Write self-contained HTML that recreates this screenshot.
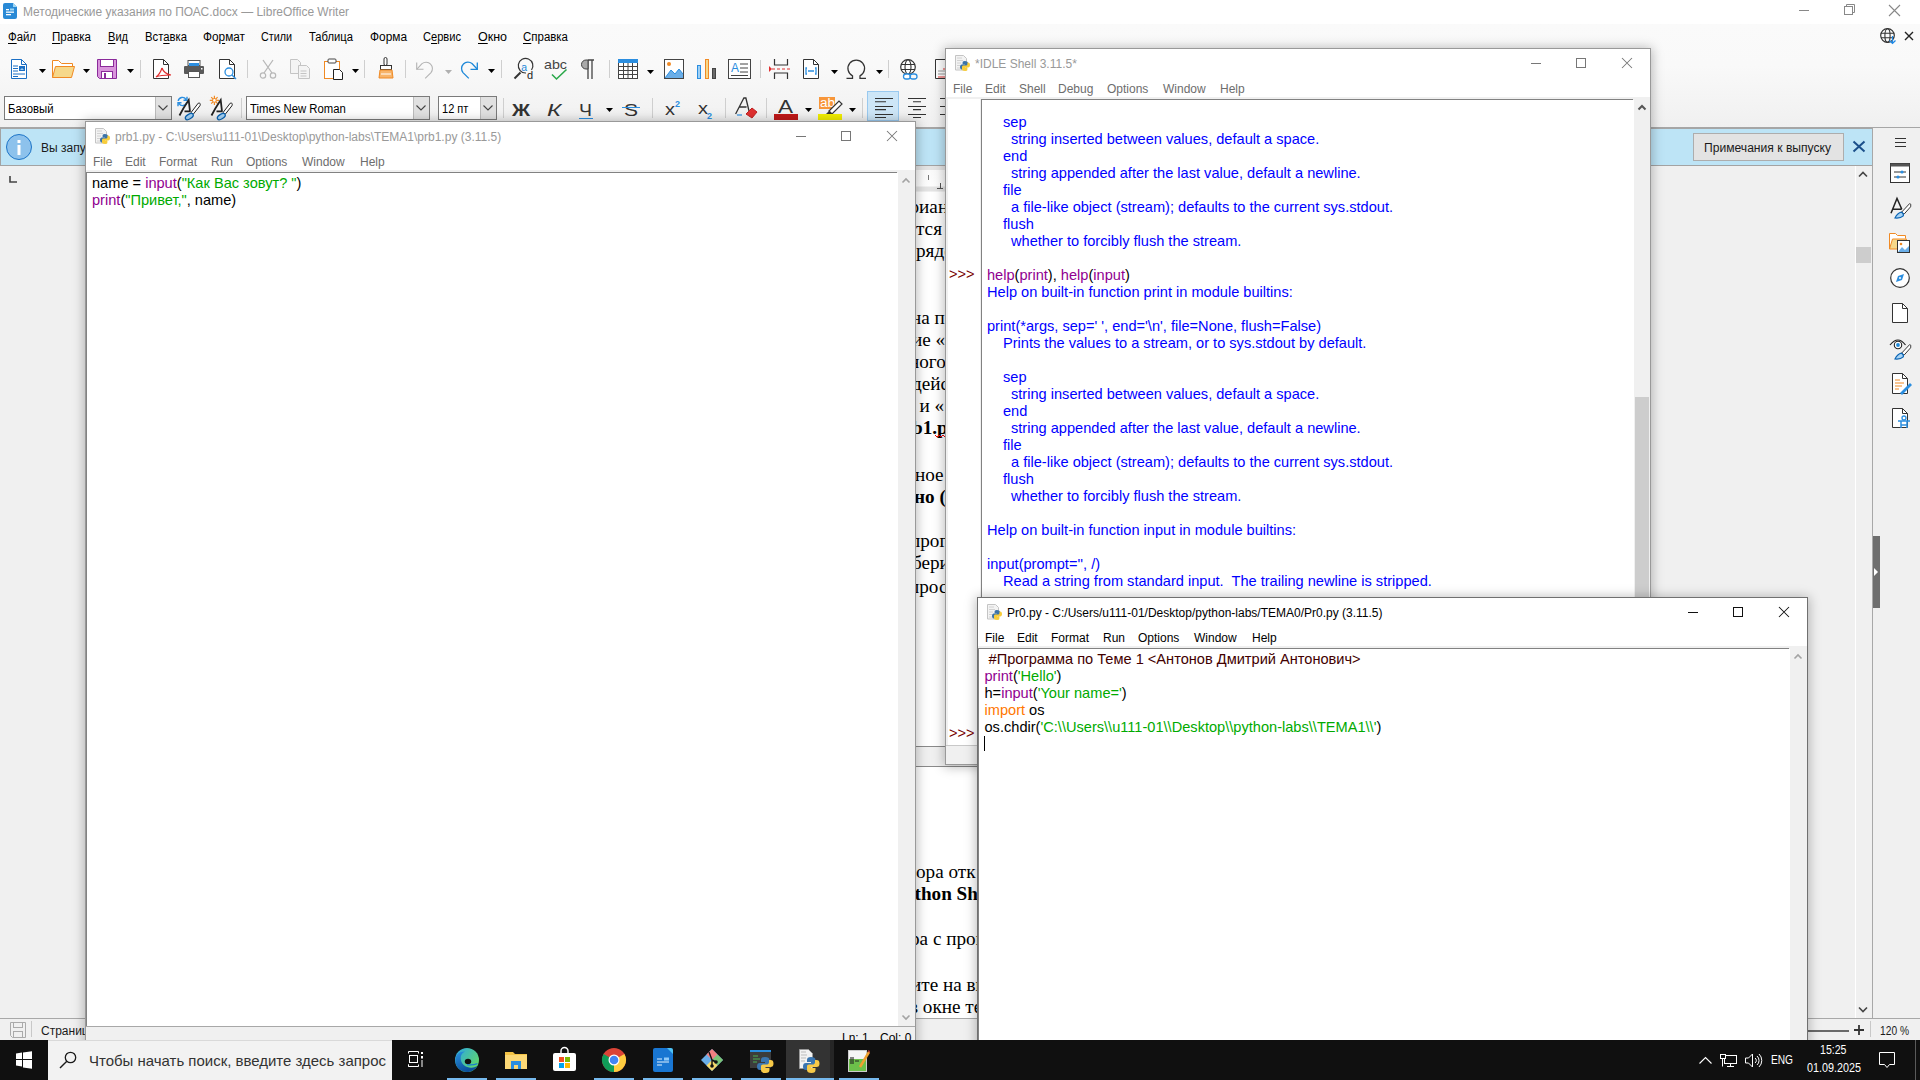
<!DOCTYPE html>
<html><head><meta charset="utf-8">
<style>
*{margin:0;padding:0;box-sizing:border-box}
html,body{width:1920px;height:1080px;overflow:hidden;background:#f0f0f0;position:relative;font-family:"Liberation Sans",sans-serif}
.a{position:absolute}
.t{position:absolute;white-space:pre;line-height:1}
svg{position:absolute;overflow:visible}
.clip{position:absolute;overflow:hidden}
</style></head><body>

<div class="a" style="left:0px;top:0px;width:1920px;height:24px;background:#fff;"></div>
<div class="a" style="left:0px;top:24px;width:1920px;height:104px;background:linear-gradient(#fafafa,#f9f9f9 40%,#f0f0f0);"></div>
<div class="a" style="left:0px;top:127px;width:1920px;height:2px;background:#a6a6a6;"></div>
<svg style="left:3px;top:3px" width="14" height="16" viewBox="0 0 14 16"><path d="M0 2a2 2 0 0 1 2-2h8l4 4v10a2 2 0 0 1-2 2H2a2 2 0 0 1-2-2z" fill="#2a8ad6"/><path d="M10 0l4 4h-4z" fill="#9fd8f5"/><rect x="3" y="6" width="3" height="1.3" fill="#fff"/><rect x="7" y="5.5" width="4" height="2" fill="#9fd8f5"/><rect x="3" y="8.5" width="8" height="1.3" fill="#fff"/><rect x="3" y="11" width="5" height="1.3" fill="#fff"/></svg>
<div class="t" style="left:23px;top:5.84px;font-size:12px;color:#999;font-family:'Liberation Sans',sans-serif;font-weight:normal;transform:scaleX(0.9970);transform-origin:0 0;">Методические указания по ПОАС.docx — LibreOffice Writer</div>
<div class="a" style="left:1799px;top:10px;width:10px;height:1px;background:#888;"></div>
<svg style="left:1844px;top:4px" width="12" height="12" viewBox="0 0 12 12"><rect x="0.5" y="2.5" width="8" height="8" fill="none" stroke="#888"/><path d="M2.5 2.5V0.5h8v8h-2" fill="none" stroke="#888"/></svg>
<svg style="left:1889px;top:5px" width="11" height="11" viewBox="0 0 11 11"><path d="M0 0L11 11M11 0L0 11" stroke="#888" stroke-width="1.1"/></svg>
<div class="t" style="left:8px;top:30.84px;font-size:12px;color:#000;font-family:'Liberation Sans',sans-serif;font-weight:normal;transform:scaleX(0.9492);transform-origin:0 0;"><u style="text-underline-offset:1.5px">Ф</u>айл</div>
<div class="t" style="left:52px;top:30.84px;font-size:12px;color:#000;font-family:'Liberation Sans',sans-serif;font-weight:normal;transform:scaleX(0.9622);transform-origin:0 0;"><u style="text-underline-offset:1.5px">П</u>равка</div>
<div class="t" style="left:108px;top:30.84px;font-size:12px;color:#000;font-family:'Liberation Sans',sans-serif;font-weight:normal;transform:scaleX(0.9215);transform-origin:0 0;"><u style="text-underline-offset:1.5px">В</u>ид</div>
<div class="t" style="left:145px;top:30.84px;font-size:12px;color:#000;font-family:'Liberation Sans',sans-serif;font-weight:normal;transform:scaleX(0.9418);transform-origin:0 0;">Вст<u style="text-underline-offset:1.5px">а</u>вка</div>
<div class="t" style="left:203px;top:30.84px;font-size:12px;color:#000;font-family:'Liberation Sans',sans-serif;font-weight:normal;transform:scaleX(0.9853);transform-origin:0 0;">Фо<u style="text-underline-offset:1.5px">р</u>мат</div>
<div class="t" style="left:261px;top:30.84px;font-size:12px;color:#000;font-family:'Liberation Sans',sans-serif;font-weight:normal;transform:scaleX(0.8965);transform-origin:0 0;">Стили</div>
<div class="t" style="left:309px;top:30.84px;font-size:12px;color:#000;font-family:'Liberation Sans',sans-serif;font-weight:normal;transform:scaleX(0.9349);transform-origin:0 0;">Таблица</div>
<div class="t" style="left:370px;top:30.84px;font-size:12px;color:#000;font-family:'Liberation Sans',sans-serif;font-weight:normal;transform:scaleX(0.9896);transform-origin:0 0;">Форма</div>
<div class="t" style="left:423px;top:30.84px;font-size:12px;color:#000;font-family:'Liberation Sans',sans-serif;font-weight:normal;transform:scaleX(0.9247);transform-origin:0 0;">С<u style="text-underline-offset:1.5px">е</u>рвис</div>
<div class="t" style="left:478px;top:30.84px;font-size:12px;color:#000;font-family:'Liberation Sans',sans-serif;font-weight:normal;transform:scaleX(1.0404);transform-origin:0 0;"><u style="text-underline-offset:1.5px">О</u>кно</div>
<div class="t" style="left:523px;top:30.84px;font-size:12px;color:#000;font-family:'Liberation Sans',sans-serif;font-weight:normal;transform:scaleX(0.9559);transform-origin:0 0;"><u style="text-underline-offset:1.5px">С</u>правка</div>
<svg style="left:1880px;top:28px" width="17" height="17" viewBox="0 0 17 17"><circle cx="7.5" cy="7.5" r="6.8" fill="none" stroke="#333" stroke-width="1.2"/><ellipse cx="7.5" cy="7.5" rx="2.6" ry="6.8" fill="none" stroke="#333" stroke-width="1.1"/><path d="M1 5.3h13M1 9.7h13" stroke="#333" stroke-width="1.1"/><path d="M12.5 8v7.5M9.5 12.5l3 3 3-3" stroke="#1e88e5" stroke-width="1.2" fill="none"/></svg>
<svg style="left:1904px;top:31px" width="10" height="10" viewBox="0 0 10 10"><path d="M1 1L9 9M9 1L1 9" stroke="#222" stroke-width="1.4"/></svg>
<svg style="left:11px;top:59px" width="16" height="20" viewBox="0 0 16 20"><path d="M0.5 0.5h10l5 5v14h-15z" fill="#fff" stroke="#1b6fc4"/><path d="M10.5 0.5v5h5" fill="none" stroke="#1b6fc4"/><path d="M2 7h5M2 9.5h5M2 12h5M2 15h12M2 17.5h5" stroke="#1b6fc4" stroke-width="1"/><rect x="8" y="7" width="6" height="5" fill="#1b6fc4"/><path d="M9 11l2-2 2 2z" fill="#9fd0f5"/></svg>
<svg style="left:39px;top:69px" width="7" height="4" viewBox="0 0 7 4"><path d="M0 0h7l-3.5 4z" fill="#000"/></svg>
<svg style="left:52px;top:60px" width="23" height="18" viewBox="0 0 23 18"><path d="M0.5 17.5V0.5h6l3 3h11v3" fill="#fff" stroke="#f08a24"/><path d="M0.5 17.5l3-11h19l-3 11z" fill="#f6d88a" stroke="#f08a24"/></svg>
<svg style="left:83px;top:69px" width="7" height="4" viewBox="0 0 7 4"><path d="M0 0h7l-3.5 4z" fill="#000"/></svg>
<svg style="left:97px;top:59px" width="20" height="20" viewBox="0 0 20 20"><path d="M0.5 0.5h19v19h-17l-2-2z" fill="#d994dc" stroke="#8a2a9a"/><rect x="3.5" y="0.5" width="13" height="7" fill="#fff" stroke="#8a2a9a"/><rect x="4.5" y="12.5" width="11" height="7" fill="#fff" stroke="#8a2a9a"/><rect x="7" y="14" width="2" height="5" fill="#8a2a9a"/></svg>
<svg style="left:127px;top:69px" width="7" height="4" viewBox="0 0 7 4"><path d="M0 0h7l-3.5 4z" fill="#000"/></svg>
<div class="a" style="left:140px;top:60px;width:1px;height:18px;background:#cfcfcf;"></div>
<svg style="left:153px;top:59px" width="19" height="20" viewBox="0 0 19 20"><path d="M0.5 0.5h10l5 5v14h-15z" fill="#fff" stroke="#333"/><path d="M10.5 0.5v5h5" fill="none" stroke="#333"/><path d="M9 9c-1 3-3 7-6 9M9 9c1 3 4 6 9 7M3 18c4-2 9-2 15-2" fill="none" stroke="#e03030" stroke-width="1.2"/></svg>
<svg style="left:184px;top:60px" width="20" height="18" viewBox="0 0 20 18"><rect x="4" y="0.5" width="12" height="5" fill="#fff" stroke="#555"/><rect x="5" y="3" width="10" height="3" fill="#2b8ee0"/><rect x="0" y="6" width="20" height="8" rx="1" fill="#5a5a5a"/><rect x="4.5" y="11.5" width="11" height="6" fill="#fff" stroke="#555"/><rect x="17" y="8" width="1.5" height="1.5" fill="#fff"/></svg>
<svg style="left:219px;top:59px" width="20" height="20" viewBox="0 0 20 20"><path d="M0.5 0.5h10l5 5v14h-15z" fill="#fff" stroke="#333"/><path d="M10.5 0.5v5h5" fill="none" stroke="#333"/><circle cx="10" cy="13" r="4" fill="#fff" stroke="#2b8ee0" stroke-width="1.3"/><path d="M13 16l4 4" stroke="#2b8ee0" stroke-width="1.5"/></svg>
<div class="a" style="left:247px;top:60px;width:1px;height:18px;background:#cfcfcf;"></div>
<svg style="left:259px;top:59px" width="18" height="20" viewBox="0 0 18 20"><path d="M4 1l9 13M14 1L5 14" stroke="#b8b8b8" stroke-width="1.3"/><circle cx="4" cy="16.5" r="2.7" fill="none" stroke="#b8b8b8" stroke-width="1.2"/><circle cx="14" cy="16.5" r="2.7" fill="none" stroke="#b8b8b8" stroke-width="1.2"/></svg>
<svg style="left:290px;top:59px" width="21" height="20" viewBox="0 0 21 20"><path d="M0.5 0.5h7l3 3v11h-10z" fill="#f4f4f4" stroke="#c4c4c4"/><path d="M8.5 6.5h8l3 3v10h-11z" fill="#f4f4f4" stroke="#c4c4c4"/><path d="M10.5 12h6M10.5 14.5h6M10.5 17h6" stroke="#c4c4c4"/></svg>
<svg style="left:324px;top:58px" width="20" height="22" viewBox="0 0 20 22"><rect x="0.5" y="3.5" width="15" height="17" fill="#fff" stroke="#f08a24"/><rect x="4" y="1" width="8" height="4" rx="1" fill="#fff" stroke="#444"/><path d="M9.5 11.5h6l3 3v7h-9z" fill="#fff" stroke="#222"/></svg>
<svg style="left:352px;top:69px" width="7" height="4" viewBox="0 0 7 4"><path d="M0 0h7l-3.5 4z" fill="#000"/></svg>
<div class="a" style="left:364px;top:60px;width:1px;height:18px;background:#cfcfcf;"></div>
<svg style="left:378px;top:57px" width="16" height="22" viewBox="0 0 16 22"><rect x="6" y="0.5" width="3" height="8" rx="1.5" fill="#fff" stroke="#333"/><rect x="2.5" y="8.5" width="11" height="4" fill="#fff" stroke="#333"/><path d="M2 13h12l1 8H1z" fill="#f7b46a" stroke="#f08a24"/><path d="M3 17h10" stroke="#fff" stroke-width="1"/></svg>
<div class="a" style="left:405px;top:60px;width:1px;height:18px;background:#cfcfcf;"></div>
<svg style="left:416px;top:60px" width="18" height="19" viewBox="0 0 18 19"><path d="M0.7 9.3L6 3.6A6.4 6.4 0 0 1 15 12.6L9.2 18.4" fill="none" stroke="#b4b4b4" stroke-width="1.1"/><path d="M0.7 2.5V9.3H7.5" fill="none" stroke="#b4b4b4" stroke-width="1.1"/></svg>
<svg style="left:445px;top:70px" width="7" height="4" viewBox="0 0 7 4"><path d="M0 0h7l-3.5 4z" fill="#b0b0b0"/></svg>
<svg style="left:460px;top:60px" width="18" height="19" viewBox="0 0 18 19"><g transform="translate(18 0) scale(-1 1)"><path d="M0.7 9.3L6 3.6A6.4 6.4 0 0 1 15 12.6L9.2 18.4" fill="none" stroke="#1e88d8" stroke-width="1.3"/><path d="M0.7 2.5V9.3H7.5" fill="none" stroke="#1e88d8" stroke-width="1.3"/></g></svg>
<svg style="left:488px;top:69px" width="7" height="4" viewBox="0 0 7 4"><path d="M0 0h7l-3.5 4z" fill="#000"/></svg>
<div class="a" style="left:501px;top:60px;width:1px;height:18px;background:#cfcfcf;"></div>
<svg style="left:513px;top:58px" width="22" height="22" viewBox="0 0 22 22"><path d="M18.5 12A7.3 7.3 0 1 0 13 15" fill="none" stroke="#333" stroke-width="1.2"/><path d="M7.5 14.5L1.5 20.5" stroke="#333" stroke-width="2"/><text x="8.2" y="12.5" font-size="10.5" fill="#1e88d8" font-family="Liberation Sans">a</text><text x="14" y="21" font-size="11" fill="#222" font-family="Liberation Sans">d</text></svg>
<div class="t" style="left:544px;top:58.00px;font-size:13px;color:#444;font-family:'Liberation Sans',sans-serif;font-weight:normal;transform:scaleX(1.0969);transform-origin:0 0;">abc</div>
<svg style="left:551px;top:69px" width="16" height="11" viewBox="0 0 16 11"><path d="M1 5.5L5.5 10L15.5 0.5" fill="none" stroke="#2aa84a" stroke-width="1.6"/></svg>
<svg style="left:580px;top:59px" width="15" height="20" viewBox="0 0 15 20"><path d="M8 1H14M8 1v19M12 1v19" stroke="#444" stroke-width="1.3" fill="none"/><path d="M8 1H6a4.5 4.5 0 0 0 0 9h2z" fill="#aaa" stroke="#444"/></svg>
<div class="a" style="left:609px;top:60px;width:1px;height:18px;background:#cfcfcf;"></div>
<svg style="left:618px;top:59px" width="20" height="20" viewBox="0 0 20 20"><rect x="0.5" y="0.5" width="19" height="19" fill="#fff" stroke="#444"/><rect x="0.5" y="0.5" width="19" height="3" fill="#2b8ee0" stroke="#2b8ee0"/><path d="M0.5 7.5h19M0.5 11.5h19M0.5 15.5h19M5.5 4v16M10 4v16M14.5 4v16" stroke="#444" stroke-width="1"/></svg>
<svg style="left:647px;top:70px" width="7" height="4" viewBox="0 0 7 4"><path d="M0 0h7l-3.5 4z" fill="#000"/></svg>
<svg style="left:664px;top:59px" width="20" height="20" viewBox="0 0 20 20"><rect x="0.5" y="0.5" width="19" height="19" fill="#fff" stroke="#444"/><circle cx="5" cy="5" r="2" fill="#f08a24"/><path d="M1 19l6-8 4 4 4-5 4 5v4z" fill="#6aaee8"/><path d="M1 19l6-8 4 4 4-5 4 5" fill="none" stroke="#2b8ee0"/></svg>
<svg style="left:697px;top:59px" width="19" height="20" viewBox="0 0 19 20"><rect x="0.5" y="6.5" width="3" height="13" fill="#9fd0f5" stroke="#2b8ee0"/><rect x="8.5" y="0.5" width="3" height="19" fill="#f6d88a" stroke="#f08a24"/><rect x="15.5" y="9.5" width="3" height="10" fill="#6a6a6a" stroke="#444"/></svg>
<svg style="left:728px;top:59px" width="23" height="20" viewBox="0 0 23 20"><rect x="0.5" y="0.5" width="22" height="19" fill="#fff" stroke="#444"/><text x="3" y="13" font-size="12" fill="#2b8ee0" font-family="Liberation Sans">A</text><path d="M12 5h8M12 9h8M12 13h8M3 16.5h17" stroke="#444"/></svg>
<div class="a" style="left:760px;top:60px;width:1px;height:18px;background:#cfcfcf;"></div>
<svg style="left:769px;top:59px" width="22" height="20" viewBox="0 0 22 20"><path d="M5.5 0v6h13V0M5.5 20v-6h13v6" fill="none" stroke="#333" stroke-width="1.2"/><path d="M3 10h19" stroke="#e03030" stroke-dasharray="3 2"/><path d="M0 7l3 3-3 3z" fill="#e03030"/></svg>
<svg style="left:803px;top:59px" width="17" height="20" viewBox="0 0 17 20"><path d="M0.5 0.5h10l5 5v14h-15z" fill="#fff" stroke="#333"/><path d="M10.5 0.5v5h5" fill="none" stroke="#333"/><path d="M4 9h-1v6h1M12 9h1v6h-1M5 12h6" stroke="#2b8ee0" stroke-width="1.3" fill="none"/></svg>
<svg style="left:831px;top:70px" width="7" height="4" viewBox="0 0 7 4"><path d="M0 0h7l-3.5 4z" fill="#000"/></svg>
<svg style="left:846px;top:59px" width="21" height="20" viewBox="0 0 21 20"><path d="M0.5 19.3H6.5V16.8A8.3 8.3 0 1 1 14 16.8V19.3H20" fill="none" stroke="#333" stroke-width="1.3"/></svg>
<svg style="left:876px;top:70px" width="7" height="4" viewBox="0 0 7 4"><path d="M0 0h7l-3.5 4z" fill="#000"/></svg>
<div class="a" style="left:888px;top:60px;width:1px;height:18px;background:#cfcfcf;"></div>
<svg style="left:899px;top:59px" width="22" height="21" viewBox="0 0 22 21"><circle cx="9" cy="8" r="7.3" fill="#fff" stroke="#333" stroke-width="1.2"/><ellipse cx="9" cy="8" rx="3" ry="7.3" fill="none" stroke="#333" stroke-width="1.1"/><path d="M2 5.5h14M2 10.5h14" stroke="#333" stroke-width="1.1"/><rect x="4.5" y="15" width="7" height="5" rx="2.5" fill="#fff" stroke="#2b8ee0" stroke-width="1.3"/><rect x="11" y="15" width="7" height="5" rx="2.5" fill="none" stroke="#2b8ee0" stroke-width="1.3"/></svg>
<svg style="left:935px;top:59px" width="12" height="20" viewBox="0 0 12 20"><path d="M0.5 0.5h12v19h-12z" fill="#fff" stroke="#333"/><path d="M3 12h8M3 15h8" stroke="#999"/><path d="M3 18h9" stroke="#e03030"/><path d="M8 10h4" stroke="#e03030"/></svg>
<div class="a" style="left:4px;top:96px;width:168px;height:24px;background:#fff;border:1px solid #7a7a7a"></div>
<div class="a" style="left:155px;top:97px;width:16px;height:22px;background:#e1e1e1;border-left:1px solid #bcbcbc"></div>
<svg style="left:158.0px;top:105.0px" width="10" height="6" viewBox="0 0 10 6"><path d="M0.5 0.5l4.5 4.5 4.5-4.5" fill="none" stroke="#444" stroke-width="1.1"/></svg>
<div class="t" style="left:7.8px;top:102.84px;font-size:12px;color:#000;font-family:'Liberation Sans',sans-serif;font-weight:normal;transform:scaleX(0.9451);transform-origin:0 0;">Базовый</div>
<svg style="left:170px;top:90px" width="36" height="35" viewBox="0 0 36 35"><path d="M8.2 11A4.3 4.3 0 0 1 16 9.3M17 6.8V10.3H13.5M16.8 12.2A4.3 4.3 0 0 1 9 13.7M8 16.2V12.7H11.5" fill="none" stroke="#2b8ee0" stroke-width="1.4"/><path d="M9.5 25.5Q13 18.5 18.7 10L20 21.5M14.5 21.3H20.5" stroke="#222" stroke-width="1.8" fill="none"/><path d="M28.2 13.2Q31.2 12.6 29.9 15.8L23.2 24.3 21 22.6Z" fill="#fff" stroke="#222" stroke-width="1"/><ellipse cx="19.3" cy="26.6" rx="4.4" ry="2.3" transform="rotate(-32 19.3 26.6)" fill="#a8d4f5" stroke="#0a64b4" stroke-width="1.3"/></svg>
<svg style="left:202px;top:90px" width="36" height="35" viewBox="0 0 36 35"><g stroke="#f08a24" stroke-width="1.2"><path d="M12.4 5.8V8.6M12.4 12.2V15M7.8 10.4H10.6M14.2 10.4H17M9.2 7.2L10.9 8.9M13.9 11.9L15.6 13.6M15.6 7.2L13.9 8.9M10.9 11.9L9.2 13.6"/></g><circle cx="12.4" cy="10.4" r="1.9" fill="#fff" stroke="#f08a24" stroke-width="1.1"/><path d="M9.5 25.5Q13 18.5 18.7 10L20 21.5M14.5 21.3H20.5" stroke="#222" stroke-width="1.8" fill="none"/><path d="M28.2 13.2Q31.2 12.6 29.9 15.8L23.2 24.3 21 22.6Z" fill="#fff" stroke="#222" stroke-width="1"/><ellipse cx="19.3" cy="26.6" rx="4.4" ry="2.3" transform="rotate(-32 19.3 26.6)" fill="#a8d4f5" stroke="#0a64b4" stroke-width="1.3"/></svg>
<div class="a" style="left:241px;top:98px;width:1px;height:20px;background:#cfcfcf;"></div>
<div class="a" style="left:246px;top:96px;width:184px;height:24px;background:#fff;border:1px solid #7a7a7a"></div>
<div class="a" style="left:413px;top:97px;width:16px;height:22px;background:#e1e1e1;border-left:1px solid #bcbcbc"></div>
<svg style="left:416.0px;top:105.0px" width="10" height="6" viewBox="0 0 10 6"><path d="M0.5 0.5l4.5 4.5 4.5-4.5" fill="none" stroke="#444" stroke-width="1.1"/></svg>
<div class="t" style="left:249.5px;top:102.84px;font-size:12px;color:#000;font-family:'Liberation Sans',sans-serif;font-weight:normal;transform:scaleX(0.9430);transform-origin:0 0;">Times New Roman</div>
<div class="a" style="left:438px;top:96px;width:59px;height:24px;background:#fff;border:1px solid #7a7a7a"></div>
<div class="a" style="left:480px;top:97px;width:16px;height:22px;background:#e1e1e1;border-left:1px solid #bcbcbc"></div>
<svg style="left:483.0px;top:105.0px" width="10" height="6" viewBox="0 0 10 6"><path d="M0.5 0.5l4.5 4.5 4.5-4.5" fill="none" stroke="#444" stroke-width="1.1"/></svg>
<div class="t" style="left:441.8px;top:102.84px;font-size:12px;color:#000;font-family:'Liberation Sans',sans-serif;font-weight:normal;transform:scaleX(0.9208);transform-origin:0 0;">12 пт</div>
<div class="a" style="left:503px;top:98px;width:1px;height:20px;background:#cfcfcf;"></div>
<div class="t" style="left:512px;top:101.61px;font-size:17px;color:#333;font-family:'Liberation Sans',sans-serif;font-weight:bold;transform:scaleX(1.1719);transform-origin:0 0;">Ж</div>
<div class="t" style="left:547px;top:101.61px;font-size:17px;color:#333;font-family:'Liberation Sans',sans-serif;font-weight:normal;transform:scaleX(1.4132);transform-origin:0 0;font-style:italic;">К</div>
<div class="t" style="left:579px;top:101.61px;font-size:17px;color:#333;font-family:'Liberation Sans',sans-serif;font-weight:normal;transform:scaleX(1.1476);transform-origin:0 0;">Ч</div>
<div class="a" style="left:579px;top:118px;width:14px;height:1px;background:#2b8ee0;"></div>
<svg style="left:606px;top:108px" width="7" height="4" viewBox="0 0 7 4"><path d="M0 0h7l-3.5 4z" fill="#000"/></svg>
<div class="t" style="left:624px;top:101.61px;font-size:17px;color:#333;font-family:'Liberation Sans',sans-serif;font-weight:normal;transform:scaleX(1.2342);transform-origin:0 0;">S</div>
<div class="a" style="left:622px;top:107px;width:18px;height:1.3px;background:#2b8ee0;"></div>
<div class="a" style="left:652px;top:98px;width:1px;height:20px;background:#cfcfcf;"></div>
<div class="t" style="left:665px;top:102.46px;font-size:16px;color:#333;font-family:'Liberation Sans',sans-serif;font-weight:normal;transform:scaleX(1.2500);transform-origin:0 0;">x</div>
<div class="t" style="left:675px;top:100.38px;font-size:9px;color:#2b8ee0;font-family:'Liberation Sans',sans-serif;font-weight:bold;">2</div>
<div class="t" style="left:698px;top:101.46px;font-size:16px;color:#333;font-family:'Liberation Sans',sans-serif;font-weight:normal;transform:scaleX(1.2500);transform-origin:0 0;">x</div>
<div class="t" style="left:707px;top:112.38px;font-size:9px;color:#2b8ee0;font-family:'Liberation Sans',sans-serif;font-weight:bold;">2</div>
<div class="a" style="left:725px;top:98px;width:1px;height:20px;background:#cfcfcf;"></div>
<svg style="left:737px;top:97px" width="20" height="22" viewBox="0 0 20 22"><path d="M1 17l6-16h2l5 13M4 10h7" fill="none" stroke="#333" stroke-width="1.3" transform="skewX(-8)"/><path d="M0 18h5" stroke="#2b8ee0" stroke-width="1.2"/><path d="M9 17l6-6 5 4-5 6z" fill="#e03030" stroke="#c02020"/></svg>
<div class="a" style="left:766px;top:98px;width:1px;height:20px;background:#cfcfcf;"></div>
<div class="t" style="left:778px;top:97.76px;font-size:18px;color:#333;font-family:'Liberation Sans',sans-serif;font-weight:normal;transform:scaleX(1.2500);transform-origin:0 0;">A</div>
<div class="a" style="left:774px;top:114px;width:24px;height:6px;background:#c01818;"></div>
<svg style="left:805px;top:108px" width="7" height="4" viewBox="0 0 7 4"><path d="M0 0h7l-3.5 4z" fill="#000"/></svg>
<div class="a" style="left:819px;top:97px;width:16px;height:12px;background:#f7963a;"></div>
<div class="t" style="left:820px;top:96.92px;font-size:12.5px;color:#fff;font-family:'Liberation Sans',sans-serif;font-weight:normal;transform:scaleX(1.0787);transform-origin:0 0;">ab</div>
<svg style="left:825px;top:97px" width="17" height="17" viewBox="0 0 17 17"><path d="M4 14L14 4l3 3L7 17z" fill="#fff" stroke="#333" stroke-width="1.2"/><path d="M1 17l3-3 3 3z" fill="#333"/></svg>
<div class="a" style="left:818px;top:114px;width:24px;height:6px;background:#f2ef00;"></div>
<svg style="left:849px;top:108px" width="7" height="4" viewBox="0 0 7 4"><path d="M0 0h7l-3.5 4z" fill="#000"/></svg>
<div class="a" style="left:862px;top:98px;width:1px;height:20px;background:#cfcfcf;"></div>
<div class="a" style="left:867px;top:91px;width:32px;height:30px;background:#cde6f7;border:1px solid #99c9ef"></div>
<svg style="left:875px;top:97px" width="19" height="22" viewBox="0 0 19 22"><path d="M0 1.5h18M0 4.8h11M0 9.5h18M0 12.6h11M0 17.5h18M0 20.5h11" stroke="#333" stroke-width="1.1"/></svg>
<svg style="left:908px;top:97px" width="19" height="22" viewBox="0 0 19 22"><path d="M0 1.5h18M5 4.8h8M0 9.5h18M5 12.6h8M0 17.5h18M5 20.5h8" stroke="#333" stroke-width="1.1"/></svg>
<svg style="left:940px;top:97px" width="10" height="22" viewBox="0 0 10 22"><path d="M0 1.5h10M0 9.5h10M0 17.5h10" stroke="#333" stroke-width="1.1"/></svg>
<div class="a" style="left:0px;top:127px;width:1873px;height:39px;background:#bde4f6;border-top:2px solid #a6a6a6;border-bottom:1px solid #a3a3a3;border-left:1px solid #a3a3a3"></div>
<svg style="left:6px;top:134px" width="26" height="26" viewBox="0 0 26 26"><circle cx="13" cy="13" r="12.5" fill="#8dc2ec" stroke="#1c74c8" stroke-width="1"/><rect x="11.5" y="11" width="3" height="10" fill="#fff"/><rect x="11.5" y="6" width="3" height="3" fill="#fff"/></svg>
<div class="t" style="left:41px;top:141.84px;font-size:12px;color:#1a1a1a;font-family:'Liberation Sans',sans-serif;font-weight:normal;">Вы запускаете</div>
<div class="a" style="left:1693px;top:133px;width:151px;height:28px;background:#e3e3e3;border:1px solid #adadad"></div>
<div class="t" style="left:1704px;top:141.84px;font-size:12px;color:#1a1a1a;font-family:'Liberation Sans',sans-serif;font-weight:normal;transform:scaleX(1.0084);transform-origin:0 0;">Примечания к выпуску</div>
<svg style="left:1853px;top:141px" width="12" height="11" viewBox="0 0 12 11"><path d="M0.5 0.5L11.5 10.5M11.5 0.5L0.5 10.5" stroke="#1b4f8a" stroke-width="2"/></svg>
<svg style="left:9px;top:176px" width="8" height="7" viewBox="0 0 8 7"><path d="M1 0v6h7" fill="none" stroke="#444" stroke-width="1.6"/></svg>
<div class="a" style="left:870px;top:166px;width:600px;height:26px;background:linear-gradient(#e4e4e4 0px,#e4e4e4 4px,#fafafa 4px,#fdfdfd 20px,#e4e4e4 21px,#e4e4e4 25px,#f0f0f0 25px);"></div>
<div class="a" style="left:928px;top:175px;width:1px;height:5px;background:#777;"></div>
<div class="a" style="left:937px;top:188px;width:6px;height:1px;background:#555;"></div>
<div class="a" style="left:939.5px;top:183px;width:1px;height:5px;background:#555;"></div>
<div class="a" style="left:400px;top:192px;width:1000px;height:554px;background:#fff;"></div>
<div class="a" style="left:400px;top:767px;width:1000px;height:251px;background:#fff;"></div>
<div class="a" style="left:400px;top:746px;width:1000px;height:1px;background:#8a8a8a;"></div>
<div class="a" style="left:400px;top:766px;width:1000px;height:1px;background:#8a8a8a;"></div>
<div class="a" style="left:1855px;top:166px;width:1px;height:852px;background:#fff;"></div>
<div class="a" style="left:1856px;top:166px;width:16px;height:852px;background:#f0f0f0;"></div>
<div class="a" style="left:1872px;top:127px;width:1px;height:891px;background:#a8a8a8;"></div>
<div class="a" style="left:1873px;top:128px;width:47px;height:890px;background:#f0f0f0;"></div>
<svg style="left:1858px;top:171px" width="10" height="6" viewBox="0 0 10 6"><path d="M1 5.5l4-4 4 4" fill="none" stroke="#444" stroke-width="1.6"/></svg>
<svg style="left:1858px;top:1007px" width="10" height="6" viewBox="0 0 10 6"><path d="M1 0.5l4 4 4-4" fill="none" stroke="#444" stroke-width="1.6"/></svg>
<div class="a" style="left:1856px;top:247px;width:15px;height:16px;background:#cdcdcd;"></div>
<div class="a" style="left:1873px;top:536px;width:7px;height:72px;background:#6e6e6e;"></div>
<svg style="left:1874px;top:568px" width="4" height="8" viewBox="0 0 4 8"><path d="M0 0l4 4-4 4z" fill="#fff"/></svg>
<svg style="left:1895px;top:138px" width="11" height="9" viewBox="0 0 11 9"><path d="M0 0.5h11M0 4.5h11M0 8.5h11" stroke="#333" stroke-width="1.2"/></svg>
<svg style="left:1890px;top:163px" width="20" height="20" viewBox="0 0 20 20"><rect x="0.5" y="0.5" width="19" height="19" fill="#fff" stroke="#333"/><rect x="0.5" y="0.5" width="19" height="3" fill="#555"/><path d="M4 9h12M4 14h12" stroke="#333"/><circle cx="12" cy="9" r="1.6" fill="#2b8ee0"/><circle cx="8" cy="14" r="1.6" fill="#2b8ee0"/></svg>
<svg style="left:1884px;top:192px" width="32" height="32" viewBox="0 0 32 32"><path d="M7 21.3L13 6.4L17.8 17.2M9.3 17.3H17.8" fill="none" stroke="#222" stroke-width="1.5"/><path d="M25.6 11.6Q27.6 11.6 26.6 14.8L20 22.2 17.6 20.2Z" fill="#fff" stroke="#222" stroke-width="0.9"/><path d="M11 26Q13.5 21 17.5 20.2Q20 21.5 19.3 23.8Q16.5 26.6 11 26Z" fill="#a8d4f5" stroke="#0a64b4" stroke-width="1.2"/></svg>
<svg style="left:1889px;top:233px" width="22" height="20" viewBox="0 0 22 20"><path d="M0.5 16V0.5h6l2 2h8v3" fill="#fff" stroke="#f08a24"/><path d="M0.5 16l3-10h14l-3 10z" fill="#f6d88a" stroke="#f08a24"/><rect x="8.5" y="7.5" width="12" height="12" fill="#fff" stroke="#333"/><circle cx="12" cy="11" r="1.3" fill="#f08a24"/><path d="M9 19l4-5 3 3 4-4v6z" fill="#6aaee8"/></svg>
<svg style="left:1890px;top:268px" width="20" height="20" viewBox="0 0 20 20"><circle cx="10" cy="10" r="9.3" fill="#fff" stroke="#333" stroke-width="1.2"/><path d="M14 6l-2 6-6 2 2-6z" fill="#2b8ee0"/><circle cx="10" cy="10" r="1" fill="#fff"/></svg>
<svg style="left:1892px;top:303px" width="16" height="20" viewBox="0 0 16 20"><path d="M0.5 0.5h10l5 5v14h-15z" fill="#fff" stroke="#333"/><path d="M10.5 0.5v5h5" fill="none" stroke="#333"/></svg>
<svg style="left:1884px;top:333px" width="32" height="32" viewBox="0 0 32 32"><path d="M6 12Q14 2 21.5 12" fill="none" stroke="#222" stroke-width="1.2"/><circle cx="14" cy="12" r="3.7" fill="#fff" stroke="#222" stroke-width="1.1"/><circle cx="14" cy="12" r="1.9" fill="#1e88d8"/><path d="M25.6 11.6Q27.6 11.6 26.6 14.8L20 22.2 17.6 20.2Z" fill="#fff" stroke="#222" stroke-width="0.9"/><path d="M11 26Q13.5 21 17.5 20.2Q20 21.5 19.3 23.8Q16.5 26.6 11 26Z" fill="#a8d4f5" stroke="#0a64b4" stroke-width="1.2"/></svg>
<svg style="left:1892px;top:373px" width="20" height="22" viewBox="0 0 20 22"><path d="M0.5 0.5h10l5 5v15h-15z" fill="#fff" stroke="#333"/><path d="M10.5 0.5v5h5" fill="none" stroke="#333"/><path d="M3 7h5M3 10h9M3 13h7M3 16h4" stroke="#f08a24"/><path d="M8 20l10-10 2 2-10 10z" fill="#2b8ee0"/></svg>
<svg style="left:1892px;top:408px" width="20" height="21" viewBox="0 0 20 21"><path d="M0.5 0.5h10l5 5v14h-15z" fill="#fff" stroke="#333"/><path d="M10.5 0.5v5h5" fill="none" stroke="#333"/><circle cx="12" cy="10" r="2" fill="#fff" stroke="#2b8ee0" stroke-width="1.3"/><path d="M6 13h12M9 13v7M15 13v7M9 17h6" fill="none" stroke="#2b8ee0" stroke-width="1.5"/></svg>
<div class="a" style="left:0px;top:1018px;width:1920px;height:22px;background:#f0f0f0;border-top:1px solid #a8a8a8"></div>
<svg style="left:10px;top:1022px" width="16" height="16" viewBox="0 0 16 16"><path d="M0.5 0.5h15v15h-13l-2-2z" fill="none" stroke="#aaa"/><rect x="3.5" y="0.5" width="9" height="5" fill="none" stroke="#aaa"/><rect x="3.5" y="9.5" width="9" height="6" fill="none" stroke="#aaa"/></svg>
<div class="a" style="left:31px;top:1021px;width:1px;height:16px;background:#c8c8c8;"></div>
<div class="t" style="left:41px;top:1024.84px;font-size:12px;color:#1a1a1a;font-family:'Liberation Sans',sans-serif;font-weight:normal;">Страница</div>
<div class="a" style="left:1600px;top:1030px;width:249px;height:2px;background:#6a6a6a;"></div>
<svg style="left:1854px;top:1025px" width="10" height="10" viewBox="0 0 10 10"><path d="M5 0v10M0 5h10" stroke="#333" stroke-width="1.8"/></svg>
<div class="a" style="left:1870px;top:1021px;width:1px;height:16px;background:#c8c8c8;"></div>
<div class="t" style="left:1880px;top:1024.84px;font-size:12px;color:#1a1a1a;font-family:'Liberation Sans',sans-serif;font-weight:normal;transform:scaleX(0.8525);transform-origin:0 0;">120 %</div>
<div class="t" style="left:909.5px;top:196.92px;font-size:19.2px;color:#000;font-family:'Liberation Serif',serif;font-weight:normal;">рианты</div>
<div class="t" style="left:916px;top:218.92px;font-size:19.2px;color:#000;font-family:'Liberation Serif',serif;font-weight:normal;">тся в</div>
<div class="t" style="left:916px;top:241.42px;font-size:19.2px;color:#000;font-family:'Liberation Serif',serif;font-weight:normal;">рядом</div>
<div class="t" style="left:911px;top:307.92px;font-size:19.2px;color:#000;font-family:'Liberation Serif',serif;font-weight:normal;">на п</div>
<div class="t" style="left:912px;top:329.92px;font-size:19.2px;color:#000;font-family:'Liberation Serif',serif;font-weight:normal;">ие «</div>
<div class="t" style="left:909px;top:351.92px;font-size:19.2px;color:#000;font-family:'Liberation Serif',serif;font-weight:normal;">ного</div>
<div class="t" style="left:912px;top:373.92px;font-size:19.2px;color:#000;font-family:'Liberation Serif',serif;font-weight:normal;">дейст</div>
<div class="t" style="left:919.5px;top:395.92px;font-size:19.2px;color:#000;font-family:'Liberation Serif',serif;font-weight:normal;">и «</div>
<div class="t" style="left:912px;top:417.92px;font-size:19.2px;color:#000;font-family:'Liberation Serif',serif;font-weight:bold;">b1.py</div>
<div class="t" style="left:915px;top:464.92px;font-size:19.2px;color:#000;font-family:'Liberation Serif',serif;font-weight:normal;">ное</div>
<div class="t" style="left:914px;top:486.92px;font-size:19.2px;color:#000;font-family:'Liberation Serif',serif;font-weight:bold;">но (</div>
<div class="t" style="left:910px;top:531.42px;font-size:19.2px;color:#000;font-family:'Liberation Serif',serif;font-weight:normal;">прог</div>
<div class="t" style="left:912px;top:553.42px;font-size:19.2px;color:#000;font-family:'Liberation Serif',serif;font-weight:normal;">бери</div>
<div class="t" style="left:909px;top:576.92px;font-size:19.2px;color:#000;font-family:'Liberation Serif',serif;font-weight:normal;">прос</div>
<div class="t" style="left:916px;top:862.42px;font-size:19.2px;color:#000;font-family:'Liberation Serif',serif;font-weight:normal;">ора отк</div>
<div class="t" style="left:914.5px;top:884.42px;font-size:19.2px;color:#000;font-family:'Liberation Serif',serif;font-weight:bold;">thon Sh</div>
<div class="t" style="left:910px;top:929.42px;font-size:19.2px;color:#000;font-family:'Liberation Serif',serif;font-weight:normal;">ра с прог</div>
<div class="t" style="left:911px;top:975.42px;font-size:19.2px;color:#000;font-family:'Liberation Serif',serif;font-weight:normal;">ите на вк</div>
<div class="t" style="left:909px;top:997.42px;font-size:19.2px;color:#000;font-family:'Liberation Serif',serif;font-weight:normal;">в окне те</div>
<svg style="left:935px;top:434px" width="10" height="4" viewBox="0 0 10 4"><path d="M0 1l2 2 2-2 2 2 2-2 2 2" fill="none" stroke="#e00" stroke-width="1"/></svg>
<div class="a" style="left:85px;top:121px;width:831px;height:970px;background:#fff;border:1px solid #999;box-shadow:0 1px 11px 1px rgba(0,0,0,0.27);"></div>
<svg style="left:95px;top:128px" width="17" height="17" viewBox="0 0 17 17"><path d="M0.5 0.5h8l3 3v11.5h-11z" fill="#f3f3f3" stroke="#c4c4c4"/><path d="M2 3h5M2 5.5h6M2 8h4M2 10.5h3M2 13h3" stroke="#d2d2d2"/><g transform="translate(5 6) scale(1.0)"><path d="M4.8 0C2.5 0 2.6 1 2.6 2V3.2H5V3.6H1.8C0.6 3.6 0 4.5 0 6S0.6 8.4 1.8 8.4H2.6V7C2.6 6 3.4 5.4 4.3 5.4H6.6C7.4 5.4 8 4.8 8 4V2C8 1 7.2 0 4.8 0Z" fill="#3b73a8"/><path d="M5.2 10C7.5 10 7.4 9 7.4 8V6.8H5V6.4H8.2C9.4 6.4 10 5.5 10 4S9.4 1.6 8.2 1.6H7.4V3C7.4 4 6.6 4.6 5.7 4.6H3.4C2.6 4.6 2 5.2 2 6V8C2 9 2.8 10 5.2 10Z" fill="#f8cd3a"/></g></svg>
<div class="t" style="left:115px;top:130.84px;font-size:12px;color:#999;font-family:'Liberation Sans',sans-serif;font-weight:normal;">prb1.py - C:\Users\u111-01\Desktop\python-labs\TEMA1\prb1.py (3.11.5)</div>
<div class="a" style="left:796px;top:136px;width:10px;height:1px;background:#777;"></div>
<svg style="left:841px;top:131px" width="10" height="10" viewBox="0 0 10 10"><rect x="0.5" y="0.5" width="9" height="9" fill="none" stroke="#777"/></svg>
<svg style="left:887px;top:131px" width="10" height="10" viewBox="0 0 10 10"><path d="M0 0L10 10M10 0L0 10" stroke="#777" stroke-width="1.05"/></svg>
<div class="t" style="left:93px;top:155.84px;font-size:12px;color:#6d6d6d;font-family:'Liberation Sans',sans-serif;font-weight:normal;">File</div>
<div class="t" style="left:125px;top:155.84px;font-size:12px;color:#6d6d6d;font-family:'Liberation Sans',sans-serif;font-weight:normal;">Edit</div>
<div class="t" style="left:159px;top:155.84px;font-size:12px;color:#6d6d6d;font-family:'Liberation Sans',sans-serif;font-weight:normal;">Format</div>
<div class="t" style="left:211px;top:155.84px;font-size:12px;color:#6d6d6d;font-family:'Liberation Sans',sans-serif;font-weight:normal;">Run</div>
<div class="t" style="left:246px;top:155.84px;font-size:12px;color:#6d6d6d;font-family:'Liberation Sans',sans-serif;font-weight:normal;">Options</div>
<div class="t" style="left:302px;top:155.84px;font-size:12px;color:#6d6d6d;font-family:'Liberation Sans',sans-serif;font-weight:normal;">Window</div>
<div class="t" style="left:360px;top:155.84px;font-size:12px;color:#6d6d6d;font-family:'Liberation Sans',sans-serif;font-weight:normal;">Help</div>
<div class="a" style="left:86px;top:170px;width:829px;height:920px;background:#f0f0f0;"></div>
<div class="a" style="left:86px;top:172px;width:811px;height:855px;background:#fff;border-top:1px solid #828282;border-left:1px solid #828282"></div>
<div class="a" style="left:898px;top:172px;width:16px;height:854px;background:#f0f0f0;"></div>
<div class="a" style="left:897px;top:173px;width:1px;height:853px;background:#fff;"></div>
<svg style="left:902px;top:178px" width="8" height="5" viewBox="0 0 8 5"><path d="M0.5 4.5l3.5-3.5 3.5 3.5" fill="none" stroke="#a3a3a3" stroke-width="1.6"/></svg>
<svg style="left:902px;top:1015px" width="8" height="5" viewBox="0 0 8 5"><path d="M0.5 0.5l3.5 3.5 3.5-3.5" fill="none" stroke="#a3a3a3" stroke-width="1.6"/></svg>
<div class="a" style="left:86px;top:1026px;width:829px;height:1px;background:#a8a8a8;"></div>
<div class="t" style="left:842px;top:1031.84px;font-size:12px;color:#000;font-family:'Liberation Sans',sans-serif;font-weight:normal;">Ln: 1</div>
<div class="t" style="left:880px;top:1031.84px;font-size:12px;color:#000;font-family:'Liberation Sans',sans-serif;font-weight:normal;">Col: 0</div>
<div class="t" style="left:92px;top:175.64px;font-size:14.6px;color:#000;font-family:'Liberation Sans',sans-serif;font-weight:normal;"><span style="color:#000">name = </span><span style="color:#900090">input</span><span style="color:#000">(</span><span style="color:#00aa00">"Как Вас зовут? "</span><span style="color:#000">)</span></div>
<div class="t" style="left:92px;top:192.64px;font-size:14.6px;color:#000;font-family:'Liberation Sans',sans-serif;font-weight:normal;"><span style="color:#900090">print</span><span style="color:#000">(</span><span style="color:#00aa00">"Привет,"</span><span style="color:#000">, name)</span></div>
<div class="a" style="left:945px;top:48px;width:706px;height:717px;background:#fff;border:1px solid #999;box-shadow:0 1px 11px 1px rgba(0,0,0,0.27);"></div>
<svg style="left:955px;top:55px" width="17" height="17" viewBox="0 0 17 17"><path d="M0.5 0.5h8l3 3v11.5h-11z" fill="#f3f3f3" stroke="#c4c4c4"/><path d="M2 3h5M2 5.5h6M2 8h4M2 10.5h3M2 13h3" stroke="#d2d2d2"/><g transform="translate(5 6) scale(1.0)"><path d="M4.8 0C2.5 0 2.6 1 2.6 2V3.2H5V3.6H1.8C0.6 3.6 0 4.5 0 6S0.6 8.4 1.8 8.4H2.6V7C2.6 6 3.4 5.4 4.3 5.4H6.6C7.4 5.4 8 4.8 8 4V2C8 1 7.2 0 4.8 0Z" fill="#3b73a8"/><path d="M5.2 10C7.5 10 7.4 9 7.4 8V6.8H5V6.4H8.2C9.4 6.4 10 5.5 10 4S9.4 1.6 8.2 1.6H7.4V3C7.4 4 6.6 4.6 5.7 4.6H3.4C2.6 4.6 2 5.2 2 6V8C2 9 2.8 10 5.2 10Z" fill="#f8cd3a"/></g></svg>
<div class="t" style="left:975px;top:57.84px;font-size:12px;color:#999;font-family:'Liberation Sans',sans-serif;font-weight:normal;">*IDLE Shell 3.11.5*</div>
<div class="a" style="left:1531px;top:63px;width:10px;height:1px;background:#777;"></div>
<svg style="left:1576px;top:58px" width="10" height="10" viewBox="0 0 10 10"><rect x="0.5" y="0.5" width="9" height="9" fill="none" stroke="#777"/></svg>
<svg style="left:1622px;top:58px" width="10" height="10" viewBox="0 0 10 10"><path d="M0 0L10 10M10 0L0 10" stroke="#777" stroke-width="1.05"/></svg>
<div class="t" style="left:953px;top:82.84px;font-size:12px;color:#6d6d6d;font-family:'Liberation Sans',sans-serif;font-weight:normal;">File</div>
<div class="t" style="left:985px;top:82.84px;font-size:12px;color:#6d6d6d;font-family:'Liberation Sans',sans-serif;font-weight:normal;">Edit</div>
<div class="t" style="left:1019px;top:82.84px;font-size:12px;color:#6d6d6d;font-family:'Liberation Sans',sans-serif;font-weight:normal;">Shell</div>
<div class="t" style="left:1058px;top:82.84px;font-size:12px;color:#6d6d6d;font-family:'Liberation Sans',sans-serif;font-weight:normal;">Debug</div>
<div class="t" style="left:1107px;top:82.84px;font-size:12px;color:#6d6d6d;font-family:'Liberation Sans',sans-serif;font-weight:normal;">Options</div>
<div class="t" style="left:1163px;top:82.84px;font-size:12px;color:#6d6d6d;font-family:'Liberation Sans',sans-serif;font-weight:normal;">Window</div>
<div class="t" style="left:1220px;top:82.84px;font-size:12px;color:#6d6d6d;font-family:'Liberation Sans',sans-serif;font-weight:normal;">Help</div>
<div class="a" style="left:946px;top:97px;width:704px;height:667px;background:#f0f0f0;"></div>
<div class="a" style="left:948px;top:99px;width:32px;height:646px;background:#fff;"></div>
<div class="a" style="left:981px;top:99px;width:652px;height:646px;background:#fff;border-top:1px solid #828282;border-left:1px solid #828282"></div>
<div class="a" style="left:1634px;top:99px;width:16px;height:646px;background:#f0f0f0;"></div>
<div class="a" style="left:1633px;top:100px;width:1px;height:645px;background:#fff;"></div>
<svg style="left:1638px;top:105px" width="8" height="5" viewBox="0 0 8 5"><path d="M0.5 4.5l3.5-3.5 3.5 3.5" fill="none" stroke="#555" stroke-width="2"/></svg>
<svg style="left:1638px;top:734px" width="8" height="5" viewBox="0 0 8 5"><path d="M0.5 0.5l3.5 3.5 3.5-3.5" fill="none" stroke="#555" stroke-width="2"/></svg>
<div class="a" style="left:1635px;top:397px;width:14px;height:348px;background:#cdcdcd;"></div>
<div class="t" style="left:949px;top:266.64px;font-size:14.6px;color:#770000;font-family:'Liberation Sans',sans-serif;font-weight:normal;">&gt;&gt;&gt;</div>
<div class="t" style="left:949px;top:725.64px;font-size:14.6px;color:#770000;font-family:'Liberation Sans',sans-serif;font-weight:normal;">&gt;&gt;&gt;</div>
<div class="t" style="left:1003px;top:114.64px;font-size:14.6px;color:#000;font-family:'Liberation Sans',sans-serif;font-weight:normal;"><span style="color:#0000ff">sep</span></div>
<div class="t" style="left:1011px;top:131.64px;font-size:14.6px;color:#000;font-family:'Liberation Sans',sans-serif;font-weight:normal;"><span style="color:#0000ff">string inserted between values, default a space.</span></div>
<div class="t" style="left:1003px;top:148.64px;font-size:14.6px;color:#000;font-family:'Liberation Sans',sans-serif;font-weight:normal;"><span style="color:#0000ff">end</span></div>
<div class="t" style="left:1011px;top:165.64px;font-size:14.6px;color:#000;font-family:'Liberation Sans',sans-serif;font-weight:normal;"><span style="color:#0000ff">string appended after the last value, default a newline.</span></div>
<div class="t" style="left:1003px;top:182.64px;font-size:14.6px;color:#000;font-family:'Liberation Sans',sans-serif;font-weight:normal;"><span style="color:#0000ff">file</span></div>
<div class="t" style="left:1011px;top:199.64px;font-size:14.6px;color:#000;font-family:'Liberation Sans',sans-serif;font-weight:normal;"><span style="color:#0000ff">a file-like object (stream); defaults to the current sys.stdout.</span></div>
<div class="t" style="left:1003px;top:216.64px;font-size:14.6px;color:#000;font-family:'Liberation Sans',sans-serif;font-weight:normal;"><span style="color:#0000ff">flush</span></div>
<div class="t" style="left:1011px;top:233.64px;font-size:14.6px;color:#000;font-family:'Liberation Sans',sans-serif;font-weight:normal;"><span style="color:#0000ff">whether to forcibly flush the stream.</span></div>
<div class="t" style="left:987px;top:267.64px;font-size:14.6px;color:#000;font-family:'Liberation Sans',sans-serif;font-weight:normal;"><span style="color:#900090">help</span><span style="color:#000">(</span><span style="color:#900090">print</span><span style="color:#000">), </span><span style="color:#900090">help</span><span style="color:#000">(</span><span style="color:#900090">input</span><span style="color:#000">)</span></div>
<div class="t" style="left:987px;top:284.64px;font-size:14.6px;color:#000;font-family:'Liberation Sans',sans-serif;font-weight:normal;"><span style="color:#0000ff">Help on built-in function print in module builtins:</span></div>
<div class="t" style="left:987px;top:318.64px;font-size:14.6px;color:#000;font-family:'Liberation Sans',sans-serif;font-weight:normal;"><span style="color:#0000ff">print(*args, sep=' ', end='\n', file=None, flush=False)</span></div>
<div class="t" style="left:1003px;top:335.64px;font-size:14.6px;color:#000;font-family:'Liberation Sans',sans-serif;font-weight:normal;"><span style="color:#0000ff">Prints the values to a stream, or to sys.stdout by default.</span></div>
<div class="t" style="left:1003px;top:369.64px;font-size:14.6px;color:#000;font-family:'Liberation Sans',sans-serif;font-weight:normal;"><span style="color:#0000ff">sep</span></div>
<div class="t" style="left:1011px;top:386.64px;font-size:14.6px;color:#000;font-family:'Liberation Sans',sans-serif;font-weight:normal;"><span style="color:#0000ff">string inserted between values, default a space.</span></div>
<div class="t" style="left:1003px;top:403.64px;font-size:14.6px;color:#000;font-family:'Liberation Sans',sans-serif;font-weight:normal;"><span style="color:#0000ff">end</span></div>
<div class="t" style="left:1011px;top:420.64px;font-size:14.6px;color:#000;font-family:'Liberation Sans',sans-serif;font-weight:normal;"><span style="color:#0000ff">string appended after the last value, default a newline.</span></div>
<div class="t" style="left:1003px;top:437.64px;font-size:14.6px;color:#000;font-family:'Liberation Sans',sans-serif;font-weight:normal;"><span style="color:#0000ff">file</span></div>
<div class="t" style="left:1011px;top:454.64px;font-size:14.6px;color:#000;font-family:'Liberation Sans',sans-serif;font-weight:normal;"><span style="color:#0000ff">a file-like object (stream); defaults to the current sys.stdout.</span></div>
<div class="t" style="left:1003px;top:471.64px;font-size:14.6px;color:#000;font-family:'Liberation Sans',sans-serif;font-weight:normal;"><span style="color:#0000ff">flush</span></div>
<div class="t" style="left:1011px;top:488.64px;font-size:14.6px;color:#000;font-family:'Liberation Sans',sans-serif;font-weight:normal;"><span style="color:#0000ff">whether to forcibly flush the stream.</span></div>
<div class="t" style="left:987px;top:522.64px;font-size:14.6px;color:#000;font-family:'Liberation Sans',sans-serif;font-weight:normal;"><span style="color:#0000ff">Help on built-in function input in module builtins:</span></div>
<div class="t" style="left:987px;top:556.64px;font-size:14.6px;color:#000;font-family:'Liberation Sans',sans-serif;font-weight:normal;"><span style="color:#0000ff">input(prompt='', /)</span></div>
<div class="t" style="left:1003px;top:573.64px;font-size:14.6px;color:#000;font-family:'Liberation Sans',sans-serif;font-weight:normal;"><span style="color:#0000ff">Read a string from standard input.  The trailing newline is stripped.</span></div>
<div class="a" style="left:946px;top:745px;width:703px;height:19px;background:#f0f0f0;border-top:1px solid #c8c8c8"></div>
<div class="a" style="left:977px;top:597px;width:831px;height:494px;background:#fff;border:1px solid #707070;box-shadow:0 1px 11px 1px rgba(0,0,0,0.27);"></div>
<svg style="left:987px;top:604px" width="17" height="17" viewBox="0 0 17 17"><path d="M0.5 0.5h8l3 3v11.5h-11z" fill="#f3f3f3" stroke="#c4c4c4"/><path d="M2 3h5M2 5.5h6M2 8h4M2 10.5h3M2 13h3" stroke="#d2d2d2"/><g transform="translate(5 6) scale(1.0)"><path d="M4.8 0C2.5 0 2.6 1 2.6 2V3.2H5V3.6H1.8C0.6 3.6 0 4.5 0 6S0.6 8.4 1.8 8.4H2.6V7C2.6 6 3.4 5.4 4.3 5.4H6.6C7.4 5.4 8 4.8 8 4V2C8 1 7.2 0 4.8 0Z" fill="#3b73a8"/><path d="M5.2 10C7.5 10 7.4 9 7.4 8V6.8H5V6.4H8.2C9.4 6.4 10 5.5 10 4S9.4 1.6 8.2 1.6H7.4V3C7.4 4 6.6 4.6 5.7 4.6H3.4C2.6 4.6 2 5.2 2 6V8C2 9 2.8 10 5.2 10Z" fill="#f8cd3a"/></g></svg>
<div class="t" style="left:1007px;top:606.84px;font-size:12px;color:#000;font-family:'Liberation Sans',sans-serif;font-weight:normal;">Pr0.py - C:/Users/u111-01/Desktop/python-labs/TEMA0/Pr0.py (3.11.5)</div>
<div class="a" style="left:1688px;top:612px;width:10px;height:1px;background:#111;"></div>
<svg style="left:1733px;top:607px" width="10" height="10" viewBox="0 0 10 10"><rect x="0.5" y="0.5" width="9" height="9" fill="none" stroke="#111"/></svg>
<svg style="left:1779px;top:607px" width="10" height="10" viewBox="0 0 10 10"><path d="M0 0L10 10M10 0L0 10" stroke="#111" stroke-width="1.05"/></svg>
<div class="t" style="left:985px;top:631.84px;font-size:12px;color:#000;font-family:'Liberation Sans',sans-serif;font-weight:normal;">File</div>
<div class="t" style="left:1017px;top:631.84px;font-size:12px;color:#000;font-family:'Liberation Sans',sans-serif;font-weight:normal;">Edit</div>
<div class="t" style="left:1051px;top:631.84px;font-size:12px;color:#000;font-family:'Liberation Sans',sans-serif;font-weight:normal;">Format</div>
<div class="t" style="left:1103px;top:631.84px;font-size:12px;color:#000;font-family:'Liberation Sans',sans-serif;font-weight:normal;">Run</div>
<div class="t" style="left:1138px;top:631.84px;font-size:12px;color:#000;font-family:'Liberation Sans',sans-serif;font-weight:normal;">Options</div>
<div class="t" style="left:1194px;top:631.84px;font-size:12px;color:#000;font-family:'Liberation Sans',sans-serif;font-weight:normal;">Window</div>
<div class="t" style="left:1252px;top:631.84px;font-size:12px;color:#000;font-family:'Liberation Sans',sans-serif;font-weight:normal;">Help</div>
<div class="a" style="left:978px;top:646px;width:829px;height:444px;background:#f0f0f0;"></div>
<div class="a" style="left:978px;top:648px;width:811px;height:420px;background:#fff;border-top:1px solid #828282;border-left:1px solid #828282"></div>
<div class="a" style="left:1790px;top:648px;width:16px;height:442px;background:#f0f0f0;"></div>
<div class="a" style="left:1789px;top:649px;width:1px;height:441px;background:#fff;"></div>
<svg style="left:1794px;top:654px" width="8" height="5" viewBox="0 0 8 5"><path d="M0.5 4.5l3.5-3.5 3.5 3.5" fill="none" stroke="#a3a3a3" stroke-width="1.6"/></svg>
<svg style="left:1794px;top:1079px" width="8" height="5" viewBox="0 0 8 5"><path d="M0.5 0.5l3.5 3.5 3.5-3.5" fill="none" stroke="#a3a3a3" stroke-width="1.6"/></svg>
<div class="t" style="left:984.5px;top:651.64px;font-size:14.6px;color:#000;font-family:'Liberation Sans',sans-serif;font-weight:normal;"><span style="color:#420000"> #Программа по Теме 1 &lt;Антонов Дмитрий Антонович&gt;</span></div>
<div class="t" style="left:984.5px;top:668.64px;font-size:14.6px;color:#000;font-family:'Liberation Sans',sans-serif;font-weight:normal;"><span style="color:#900090">print</span><span style="color:#000">(</span><span style="color:#00aa00">'Hello'</span><span style="color:#000">)</span></div>
<div class="t" style="left:984.5px;top:685.64px;font-size:14.6px;color:#000;font-family:'Liberation Sans',sans-serif;font-weight:normal;"><span style="color:#000">h=</span><span style="color:#900090">input</span><span style="color:#000">(</span><span style="color:#00aa00">'Your name='</span><span style="color:#000">)</span></div>
<div class="t" style="left:984.5px;top:702.64px;font-size:14.6px;color:#000;font-family:'Liberation Sans',sans-serif;font-weight:normal;"><span style="color:#ff7700">import</span><span style="color:#000"> os</span></div>
<div class="t" style="left:984.5px;top:719.64px;font-size:14.6px;color:#000;font-family:'Liberation Sans',sans-serif;font-weight:normal;"><span style="color:#000">os.chdir(</span><span style="color:#00aa00">'C:\\Users\\u111-01\\Desktop\\python-labs\\TEMA1\\'</span><span style="color:#000">)</span></div>
<div class="a" style="left:984px;top:736px;width:1px;height:15px;background:#000;"></div>
<div class="a" style="left:0px;top:1040px;width:1920px;height:40px;background:#101010;"></div>
<svg style="left:16px;top:1052px" width="16" height="16" viewBox="0 0 16 16"><path d="M0 1.4L6 0.6V7H0zM7 0.5L16 -0.7V7H7zM0 8h6v6.4L0 13.6zM7 8h9v8.7l-9-1.2z" fill="#fff"/></svg>
<div class="a" style="left:48px;top:1040px;width:344px;height:40px;background:#f2f2f2;border-top:1px solid #d9d9d9"></div>
<svg style="left:59px;top:1051px" width="13" height="18" viewBox="0 0 13 18"><circle cx="11.5" cy="6.5" r="5.2" fill="none" stroke="#1a1a1a" stroke-width="1.3"/><path d="M7.8 10.2L1 17" stroke="#1a1a1a" stroke-width="1.4"/></svg>
<div class="t" style="left:89px;top:1053.30px;font-size:15px;color:#333;font-family:'Liberation Sans',sans-serif;font-weight:normal;transform:scaleX(0.9980);transform-origin:0 0;">Чтобы начать поиск, введите здесь запрос</div>
<svg style="left:408px;top:1051px" width="17" height="16" viewBox="0 0 17 16"><path d="M0.5 0.5h10v2M0.5 0.5v2M0.5 13.5v2h10v-2M0.5 15.5v-2" fill="none" stroke="#fff" stroke-width="1"/><rect x="1.5" y="4.5" width="8" height="7" fill="none" stroke="#fff"/><rect x="13" y="1" width="2" height="2" fill="#fff"/><rect x="13" y="5" width="2" height="2.5" fill="#fff"/><path d="M14 9v7" stroke="#fff"/></svg>
<svg style="left:455px;top:1048px" width="24" height="24" viewBox="0 0 24 24"><defs><linearGradient id="eg" x1="0" y1="0" x2="1" y2="0.7"><stop offset="0" stop-color="#2aa6e6"/><stop offset="1" stop-color="#62d86a"/></linearGradient><linearGradient id="eb" x1="0" y1="0" x2="0.4" y2="1"><stop offset="0" stop-color="#2a93e0"/><stop offset="1" stop-color="#0b4f9c"/></linearGradient></defs><circle cx="12" cy="12" r="12" fill="url(#eg)"/><path d="M0.3 12.5C0.6 6 5 3 10 3.5 6.5 5 5 8.5 6 12.5 7 17 12 20.5 18 19.5 20 19.2 21.5 18.5 22.5 17.5 20.5 21.5 16.5 24 12 24 5.5 24 0.3 19 0.3 12.5Z" fill="url(#eb)"/><ellipse cx="13" cy="13.5" rx="3.2" ry="2.8" fill="#111"/><path d="M12 16.6c3 .5 7 .3 10.5-1" fill="none" stroke="#1a7fd0" stroke-width="1.2"/></svg>
<div class="a" style="left:447px;top:1078px;width:40px;height:2px;background:#76b9ed;"></div>
<svg style="left:505px;top:1051px" width="22" height="18" viewBox="0 0 22 18"><path d="M0 1h8l2 2h12v15H0z" fill="#f4c345"/><rect x="0" y="4" width="22" height="14" fill="#fcd876"/><path d="M6 18v-8h10v8h-3v-4h-4v4z" fill="#2b8ee0"/></svg>
<div class="a" style="left:496px;top:1078px;width:40px;height:2px;background:#76b9ed;"></div>
<svg style="left:553px;top:1047px" width="23" height="24" viewBox="0 0 23 24"><path d="M8 6V4a3.5 3.5 0 0 1 7 0v2" fill="none" stroke="#fff" stroke-width="1.4"/><rect x="0" y="6" width="23" height="18" rx="2" fill="#fff"/><rect x="6" y="10" width="5" height="5" fill="#f25022"/><rect x="12" y="10" width="5" height="5" fill="#7fba00"/><rect x="6" y="16" width="5" height="5" fill="#00a4ef"/><rect x="12" y="16" width="5" height="5" fill="#ffb900"/></svg>
<svg style="left:602px;top:1048px" width="24" height="24" viewBox="0 0 24 24"><circle cx="12" cy="12" r="12" fill="#db4437"/><path d="M12 12L1.6 6A12 12 0 0 0 12 24z" fill="#0f9d58"/><path d="M12 12l10.4-6A12 12 0 0 1 12 24z" fill="#ffcd40"/><path d="M12 12L1.6 6 12 12h10.4" fill="none"/><circle cx="12" cy="12" r="5.5" fill="#fff"/><circle cx="12" cy="12" r="4.3" fill="#4285f4"/></svg>
<div class="a" style="left:594px;top:1078px;width:40px;height:2px;background:#76b9ed;"></div>
<svg style="left:653px;top:1048px" width="20" height="24" viewBox="0 0 20 24"><path d="M2 0h14l4 4v18a2 2 0 0 1-2 2H2a2 2 0 0 1-2-2V2a2 2 0 0 1 2-2z" fill="#1976d2"/><path d="M14 0h4a2 2 0 0 1 2 2v4z" fill="#4fc3f7"/><path d="M4 11h5M4 14h12M4 17h5" stroke="#e3f2fd" stroke-width="1.2"/><rect x="11" y="9.5" width="5" height="3" fill="#90caf9"/></svg>
<div class="a" style="left:643px;top:1078px;width:40px;height:2px;background:#76b9ed;"></div>
<svg style="left:700px;top:1048px" width="24" height="24" viewBox="0 0 24 24"><path d="M12 1l11 11-11 11L1 12z" fill="#6aaee8"/><path d="M12 1l5.5 5.5L12 12 6.5 6.5z" fill="#f08080"/><path d="M17.5 6.5L23 12l-5.5 5.5L12 12z" fill="#7cc576"/><path d="M12 12l5.5 5.5L12 23l-5.5-5.5z" fill="#f6d86a"/><path d="M9 4l3 8M12 12l4 2M12 12v6" stroke="#111" stroke-width="1.4"/><circle cx="12" cy="18" r="1.8" fill="#111"/><circle cx="16" cy="14" r="1.8" fill="#111"/></svg>
<div class="a" style="left:692px;top:1078px;width:40px;height:2px;background:#76b9ed;"></div>
<svg style="left:750px;top:1050px" width="23" height="22" viewBox="0 0 23 22"><rect x="0" y="0" width="21" height="18" fill="#3c3c3c"/><rect x="0" y="0" width="21" height="2" fill="#2b8ee0"/><path d="M3 6h5M3 9h7M3 12h4" stroke="#4caf50" stroke-width="1.2"/></svg>
<svg style="left:757px;top:1057px" width="16" height="16" viewBox="0 0 16 16"><path d="M8 0c-3 0-4 1-4 3v2h4v1H3C1 6 0 7 0 9.5S1 13 3 13h1.5v-2.2c0-1.5 1.2-2.3 2.5-2.3h3.5c1.2 0 2-.8 2-2V3c0-2-1.5-3-4.5-3z" fill="#3a75b0"/><path d="M8.5 16c3 0 4-1 4-3v-2h-4v-1h5c2 0 3-1 3-3.5S15.5 3 13.5 3H12v2.2c0 1.5-1.2 2.3-2.5 2.3H6c-1.2 0-2 .8-2 2V13c0 2 1.5 3 4.5 3z" fill="#f7c948"/></svg>
<div class="a" style="left:741px;top:1078px;width:40px;height:2px;background:#76b9ed;"></div>
<div class="a" style="left:786px;top:1040px;width:45px;height:40px;background:#333333;"></div>
<div class="a" style="left:830px;top:1040px;width:4px;height:40px;background:#262626;"></div>
<svg style="left:799px;top:1049px" width="14" height="20" viewBox="0 0 14 20"><path d="M0.5 0.5h9l4 4v15h-13z" fill="#f2f2f2" stroke="#999"/><path d="M2 3h5M2 6h6M2 9h5M2 12h4" stroke="#bbb"/></svg>
<svg style="left:803px;top:1057px" width="16" height="16" viewBox="0 0 16 16"><path d="M8 0c-3 0-4 1-4 3v2h4v1H3C1 6 0 7 0 9.5S1 13 3 13h1.5v-2.2c0-1.5 1.2-2.3 2.5-2.3h3.5c1.2 0 2-.8 2-2V3c0-2-1.5-3-4.5-3z" fill="#3a75b0"/><path d="M8.5 16c3 0 4-1 4-3v-2h-4v-1h5c2 0 3-1 3-3.5S15.5 3 13.5 3H12v2.2c0 1.5-1.2 2.3-2.5 2.3H6c-1.2 0-2 .8-2 2V13c0 2 1.5 3 4.5 3z" fill="#f7c948"/></svg>
<div class="a" style="left:786px;top:1078px;width:48px;height:2px;background:#76b9ed;"></div>
<svg style="left:848px;top:1049px" width="23" height="23" viewBox="0 0 23 23"><rect x="0.5" y="1.5" width="18" height="21" fill="#f5f5f5" stroke="#ccc"/><rect x="1" y="10" width="17" height="12" fill="#6cc04a"/><path d="M3 8v7M5 8v7M7 12h4" stroke="#222" stroke-width="1.1"/><path d="M12 18L21 3" stroke="#f0a030" stroke-width="2.5"/><path d="M20 1l2 1-1 2z" fill="#d33"/></svg>
<div class="a" style="left:839px;top:1078px;width:40px;height:2px;background:#76b9ed;"></div>
<svg style="left:1699px;top:1057px" width="13" height="7" viewBox="0 0 13 7"><path d="M0.5 6.5l6-6 6 6" fill="none" stroke="#fff" stroke-width="1.1"/></svg>
<svg style="left:1720px;top:1054px" width="17" height="13" viewBox="0 0 17 13"><rect x="4.5" y="1.5" width="12" height="8" fill="none" stroke="#fff"/><rect x="0.5" y="0.5" width="5" height="4" fill="#111" stroke="#fff"/><path d="M10.5 9.5v3M7 12.5h7M2.5 4.5v8" stroke="#fff"/></svg>
<svg style="left:1745px;top:1053px" width="17" height="15" viewBox="0 0 17 15"><path d="M0.5 5h3l4-4v13l-4-4h-3z" fill="none" stroke="#fff"/><path d="M10 5a3 3 0 0 1 0 5M12 3a6 6 0 0 1 0 9M14 1a9 9 0 0 1 0 13" fill="none" stroke="#fff"/></svg>
<div class="t" style="left:1771px;top:1053.84px;font-size:12px;color:#fff;font-family:'Liberation Sans',sans-serif;font-weight:normal;transform:scaleX(0.8462);transform-origin:0 0;">ENG</div>
<div class="t" style="left:1820px;top:1044.34px;font-size:12px;color:#fff;font-family:'Liberation Sans',sans-serif;font-weight:normal;transform:scaleX(0.8829);transform-origin:0 0;">15:25</div>
<div class="t" style="left:1807px;top:1062.34px;font-size:12px;color:#fff;font-family:'Liberation Sans',sans-serif;font-weight:normal;transform:scaleX(0.8995);transform-origin:0 0;">01.09.2025</div>
<svg style="left:1879px;top:1052px" width="16" height="17" viewBox="0 0 16 17"><path d="M0.5 0.5h15v12h-5l-2.5 3-2.5-3h-5z" fill="none" stroke="#fff"/></svg>
<div class="a" style="left:1915px;top:1040px;width:1px;height:40px;background:#5a5a5a;"></div>
</body></html>
